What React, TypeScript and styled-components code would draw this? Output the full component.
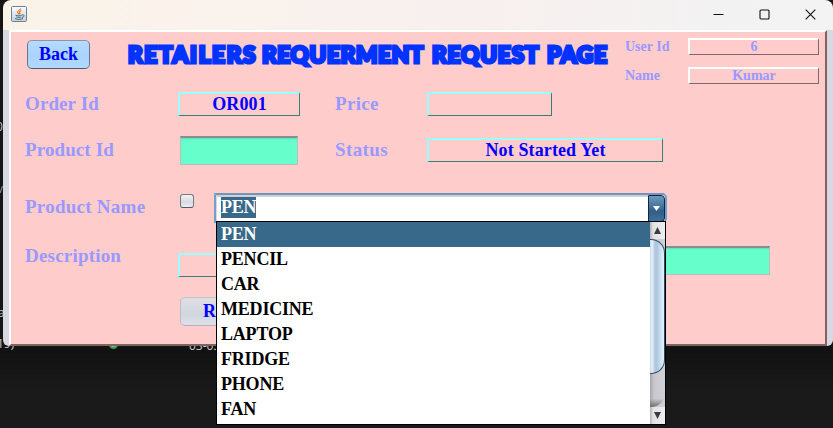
import React from "react";
import styled, { createGlobalStyle } from "styled-components";

const GlobalStyle = createGlobalStyle`
  * { box-sizing: border-box; }
  body { margin: 0; background: #191919; overflow: hidden; }
`;

const Desktop = styled.main`
  position: relative;
  width: 833px;
  height: 428px;
  overflow: hidden;
  background: linear-gradient(#151515 0 346px, #121212 350px, #1a1a1a 395px);
  font-family: "Liberation Serif", "Times New Roman", serif;
  font-weight: bold;
`;

const BackdropText = styled.span<{ $x: number; $y: number; $color?: string }>`
  position: absolute;
  left: ${(p) => p.$x}px;
  top: ${(p) => p.$y}px;
  font: 12px/14px "Open Sans", sans-serif;
  color: ${(p) => p.$color ?? "#c8c8c8"};
  white-space: nowrap;
`;

const BackdropDot = styled.span`
  position: absolute;
  left: 109px;
  top: 340px;
  width: 9px;
  height: 9px;
  border-radius: 50%;
  background: #a9b9aa;
  border: 2px solid #3c9a4c;
`;

const Window = styled.section`
  position: relative;
  margin-left: 3px;
  width: 830px;
  height: 346px;
  display: flex;
  flex-direction: column;
`;

const TitleBar = styled.header`
  flex: 0 0 30px;
  display: flex;
  align-items: center;
  justify-content: space-between;
  padding: 0 17px 2px 8px;
  border-radius: 8px 8px 0 0;
  background: linear-gradient(90deg, #f9f3e8 0%, #faf2ec 25%, #f8f0ee 55%, #f3f2f2 85%, #f3f3f3 100%);
`;

const WindowControls = styled.div`
  display: flex;
  gap: 35px;
  svg { display: block; }
`;

const Frame = styled.div`
  flex: 1;
  padding: 0 6px;
  border-radius: 0 0 6px 6px;
  background: #d6d9e1;
`;

const Panel = styled.div`
  height: 316px;
  background: #ffcccc;
  border-style: solid;
  border-width: 2px;
  border-color: #ffffff #806464 #806464 #ffffff;
  padding-left: 14px;
`;

const Header = styled.div`
  display: flex;
  align-items: flex-start;
  height: 60px;
`;

const Button = styled.button<{ $tone: "blue" | "grey"; $w: number }>`
  width: ${(p) => p.$w}px;
  height: 29px;
  padding: 0 0 1px;
  border: 1px solid;
  border-color: ${(p) => (p.$tone === "blue" ? "#8898aa #65788d #4b5c70" : "#c0c2ca #b9bec8 #adb4c0")};
  border-radius: 5px;
  background: ${(p) =>
    p.$tone === "blue" ? "linear-gradient(#b6dbff, #a9d2fd 55%, #b1dafe)" : "linear-gradient(#dedfe3, #d2d6df 60%, #dee1e8)"};
  color: #0000ff;
  font: bold 18px/26px "Liberation Serif", serif;
`;

const BackSlot = styled.div`
  flex: 0 0 65px;
  padding: 8px 0 0 2px;
`;

const Title = styled.h1`
  flex: 0 0 520px;
  display: flex;
  margin: 0;
  padding: 7px 0 0 38px;
  font: 900 22.5px/32px Lato, sans-serif;
  color: #0033ff;
  white-space: nowrap;
  -webkit-text-stroke: 3.2px #0033ff;
`;

const TitleWord = styled.span<{ $w: number; $spacing: number }>`
  flex: 0 0 ${(p) => p.$w}px;
  letter-spacing: ${(p) => p.$spacing}px;
`;

const Account = styled.div`
  display: grid;
  grid-template-columns: 63px 131px;
  row-gap: 12px;
  padding: 6px 0 0 15px;
`;

const AccountLabel = styled.span`
  font-size: 14px;
  line-height: 17px;
  color: #9999ff;
`;

const AccountValue = styled.div`
  height: 17px;
  border-style: solid;
  border-width: 2px 1px 1px 2px;
  border-color: #ffffff #806666 #806666 #ffffff;
  font-size: 14px;
  line-height: 14px;
  text-align: center;
  color: #9999ff;
`;

const FormRow = styled.div<{ $h: number }>`
  display: flex;
  align-items: flex-start;
  height: ${(p) => p.$h}px;
`;

const Label = styled.label<{ $w: number; $top?: number; $spacing?: number }>`
  flex: 0 0 ${(p) => p.$w}px;
  margin-top: ${(p) => p.$top ?? 0}px;
  letter-spacing: ${(p) => p.$spacing ?? 0}px;
  font-size: 19px;
  line-height: 24px;
  color: #9999ff;
`;

const Value = styled.div<{ $w: number; $top?: number; $gap?: number }>`
  flex: 0 0 ${(p) => p.$w}px;
  height: 24px;
  margin-top: ${(p) => p.$top ?? 0}px;
  margin-right: ${(p) => p.$gap ?? 0}px;
  border-style: solid;
  border-width: 2px 1px 1px 2px;
  border-color: #99ffff #38806b #38806b #99ffff;
  font-size: 18px;
  line-height: 21px;
  letter-spacing: 0.12px;
  text-align: center;
  color: #0000ff;
`;

const TextField = styled.div<{ $w: number; $left?: number; $gap?: number }>`
  flex: 0 0 ${(p) => p.$w}px;
  height: 29px;
  margin-left: ${(p) => p.$left ?? 0}px;
  margin-right: ${(p) => p.$gap ?? 0}px;
  border: 1px solid #b8bdbd;
  border-top: 2px solid #8b8e90;
  background: linear-gradient(#5de0b5, #66ffcc 2px);
`;

const CheckBox = styled.span`
  flex: 0 0 14px;
  height: 14px;
  margin: 1px 20px 0 2px;
  border: 1px solid #747a85;
  border-bottom-color: #4e5967;
  border-radius: 3px;
  background: linear-gradient(#f3f3f5, #d7dae1 60%, #eceef2);
`;

const Combo = styled.div`
  position: relative;
  flex: 0 0 453px;
  height: 30px;
  display: flex;
  border: 2px solid #739fca;
  border-top-color: #6e95bd;
  border-bottom-width: 1px;
  border-radius: 0 5px 5px 0;
  background: #ffffff;
`;

const ComboInput = styled.div`
  flex: 1;
  padding: 0 0 0 4px;
  border-top: 2px solid #d0d0d0;
  border-left: 1px solid #d8d8d8;
`;

const Selection = styled.span`
  display: block;
  width: 35px;
  height: 21px;
  background: #39698a;
  color: #ffffff;
  font-size: 18px;
  line-height: 21px;
  letter-spacing: -0.3px;
`;

const ComboButton = styled.span`
  flex: 0 0 17px;
  display: flex;
  align-items: center;
  justify-content: center;
  border: 1px solid #0f2842;
  border-radius: 0 4px 4px 0;
  background: linear-gradient(#7098bd, #43709a 45%, #315d86 60%, #40709a);
`;

const Popup = styled.div`
  position: absolute;
  z-index: 2;
  left: 0;
  top: 26px;
  width: 450px;
  height: 204px;
  display: flex;
  border: 1px solid #000000;
  background: #ffffff;
`;

const Options = styled.ul`
  flex: 1;
  margin: 0;
  padding: 0;
  list-style: none;
`;

const Option = styled.li<{ $active: boolean }>`
  height: 25px;
  padding-left: 4px;
  font-size: 18px;
  line-height: 25px;
  letter-spacing: -0.2px;
  color: ${(p) => (p.$active ? "#ffffff" : "#000000")};
  background: ${(p) => (p.$active ? "#39698a" : "#ffffff")};
`;

const ScrollBar = styled.div`
  flex: 0 0 15px;
  display: flex;
  flex-direction: column;
  background: linear-gradient(90deg, #a5a5a9, #c8c8cd 4px, #d0d1d7);
`;

const ScrollButton = styled.span`
  flex: 0 0 17px;
  display: flex;
  align-items: center;
  justify-content: center;
  background: linear-gradient(90deg, #b2b2b4, #e2e2e4 3px, #edeef1);
`;

const Thumb = styled.span`
  flex: 0 0 135px;
  border: 1px solid #2a4c6b;
  border-left: 0;
  border-radius: 0 14px 14px 0;
  background: linear-gradient(90deg, #c5d5e2, #e9f1f7 2px, #b0c7dc 5px, #aec7de 7px, #dceefb 13px);
`;

const TrackEnd = styled.span`
  flex: 1;
  border-radius: 0 0 14px 0;
  background: linear-gradient(transparent 75%, #707074);
`;

const OPTIONS = ["PEN", "PENCIL", "CAR", "MEDICINE", "LAPTOP", "FRIDGE", "PHONE", "FAN"];

function JavaIcon() {
  return (
    <svg width="16" height="16" viewBox="0 0 16 16">
      <defs>
        <linearGradient id="tile" x1="0" y1="0" x2="0" y2="1">
          <stop offset="0" stopColor="#fbfcfd" />
          <stop offset="1" stopColor="#c7ced5" />
        </linearGradient>
      </defs>
      <rect x=".5" y=".5" width="15" height="15" rx="1.2" fill="url(#tile)" stroke="#66839b" />
      <path d="M9.6 2.3C9.9 4 5.9 4.8 6.5 6.4L8 8.5C7.5 7 8.2 6.8 9 5.8M10.4 4.4C8 5.3 8.2 6.2 9.1 7.2L8.4 8.4" fill="none" stroke="#e9802c" strokeWidth="1.1" />
      <path d="M4.6 9.3c1.5.7 4.8.7 6.2-.1M5.3 11c1.5.5 3.6.5 4.9 0M4 12.5c2.5 1.2 6 1.1 8 0M11 9c3-.7 2.7 2-.1 2.4" fill="none" stroke="#426984" />
    </svg>
  );
}

export default function App() {
  return (
    <>
      <GlobalStyle />
      <Desktop>
        <BackdropText $x={-4} $y={120}>0</BackdropText>
        <BackdropText $x={-3} $y={182} $color="#879cb0">v</BackdropText>
        <BackdropText $x={-2} $y={306}>a</BackdropText>
        <BackdropText $x={-3} $y={337}>19)</BackdropText>
        <BackdropDot />
        <BackdropText $x={189} $y={339}>03-03</BackdropText>
        <Window>
          <TitleBar>
            <JavaIcon />
            <WindowControls>
              <svg width="11" height="11" viewBox="0 0 11 11" stroke="#111" fill="none"><path d="M.5 5.5h10" /></svg>
              <svg width="11" height="11" viewBox="0 0 11 11" stroke="#111" fill="none"><rect x="1" y="1" width="9" height="9" rx="1" strokeWidth="1.1" /></svg>
              <svg width="11" height="11" viewBox="0 0 11 11" stroke="#111" fill="none"><path d="M.7.7l9.6 9.6M10.3.7L.7 10.3" strokeWidth="1.1" /></svg>
            </WindowControls>
          </TitleBar>
          <Frame>
            <Panel>
              <Header>
                <BackSlot><Button $tone="blue" $w={63}>Back</Button></BackSlot>
                <Title>
                  <TitleWord $w={134} $spacing={1.7}>RETAILERS</TitleWord>
                  <TitleWord $w={170} $spacing={0.7}>REQUERMENT</TitleWord>
                  <TitleWord $w={115} $spacing={0.9}>REQUEST</TitleWord>
                  <TitleWord $w={63} $spacing={0.8}>PAGE</TitleWord>
                </Title>
                <Account>
                  <AccountLabel>User Id</AccountLabel>
                  <AccountValue>6</AccountValue>
                  <AccountLabel>Name</AccountLabel>
                  <AccountValue>Kumar</AccountValue>
                </Account>
              </Header>
              <FormRow $h={44}>
                <Label $w={153} $spacing={0.1}>Order Id</Label>
                <Value $w={122} $gap={35}>OR001</Value>
                <Label $w={92} $spacing={0.3}>Price</Label>
                <Value $w={125} />
              </FormRow>
              <FormRow $h={57}>
                <Label $w={153} $top={2} $spacing={0.1}>Product Id</Label>
                <TextField $w={118} $left={2} $gap={37} />
                <Label $w={92} $top={2} $spacing={0.4}>Status</Label>
                <Value $w={236} $top={2}>Not Started Yet</Value>
              </FormRow>
              <FormRow $h={53}>
                <Label $w={153} $top={2} $spacing={0.25}>Product Name</Label>
                <CheckBox />
                <Combo>
                  <ComboInput><Selection>PEN</Selection></ComboInput>
                  <ComboButton><svg width="7" height="5"><path d="M0 0h7L3.5 5z" fill="#fff" /></svg></ComboButton>
                  <Popup>
                    <Options>
                      {OPTIONS.map((name, i) => <Option key={name} $active={i === 0}>{name}</Option>)}
                    </Options>
                    <ScrollBar>
                      <ScrollButton><svg width="7" height="7"><path d="M0 7h7L3.5 0z" fill="#3c3d40" /></svg></ScrollButton>
                      <Thumb />
                      <TrackEnd />
                      <ScrollButton><svg width="7" height="7"><path d="M0 0h7L3.5 7z" fill="#3c3d40" /></svg></ScrollButton>
                    </ScrollBar>
                  </Popup>
                </Combo>
              </FormRow>
              <FormRow $h={51}>
                <Label $w={153} $top={-2} $spacing={0.2}>Description</Label>
                <Value $w={236} $top={7} />
                <TextField $w={296} $left={60} />
              </FormRow>
              <FormRow $h={29}>
                <Label as="span" $w={155} />
                <Button $tone="grey" $w={108}>Request</Button>
              </FormRow>
            </Panel>
          </Frame>
        </Window>
      </Desktop>
    </>
  );
}
